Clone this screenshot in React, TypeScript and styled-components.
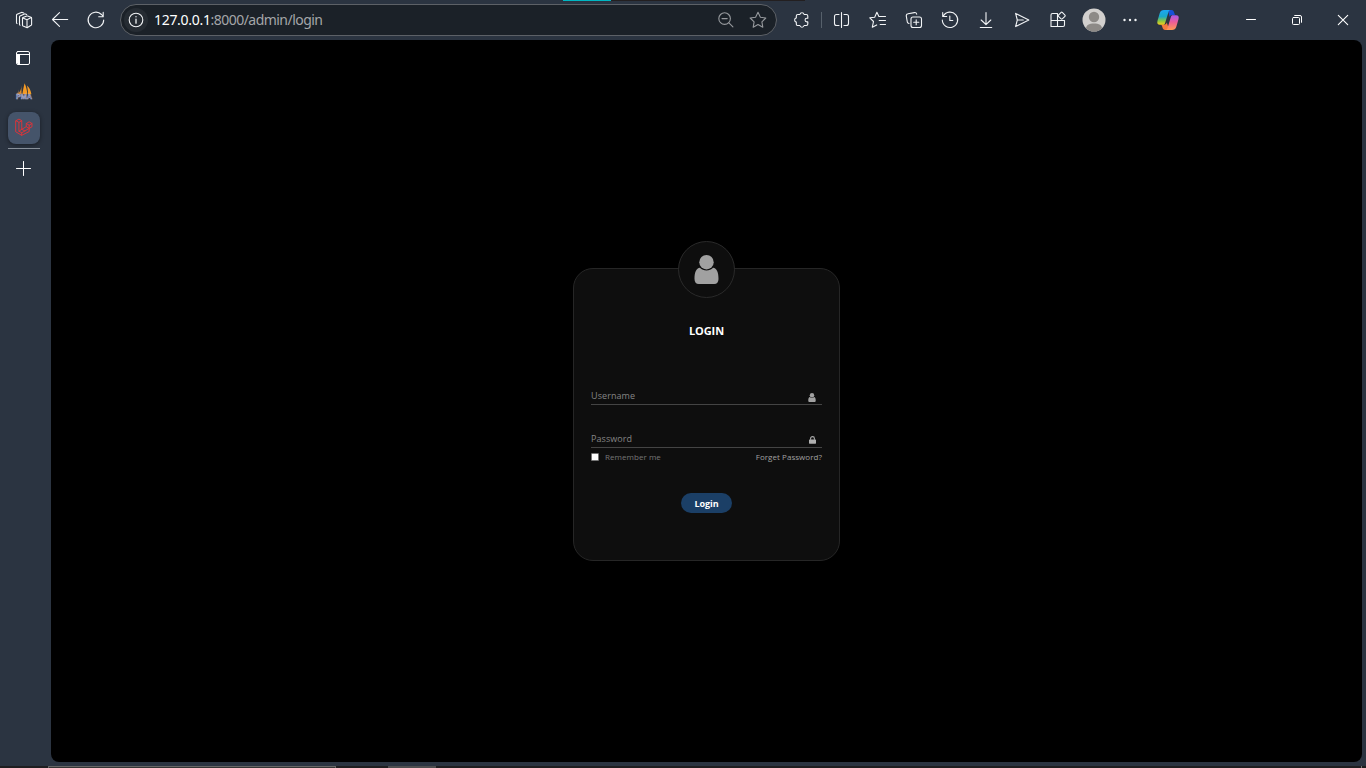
import React from 'react';
import styled, { createGlobalStyle } from 'styled-components';

const GlobalStyle = createGlobalStyle`
  *, *::before, *::after { box-sizing: border-box; }
  html, body { margin: 0; height: 100%; overflow: hidden; background: #2b3441; }
`;

const Browser = styled.div`
  position: relative;
  display: flex;
  flex-direction: column;
  width: 1366px;
  height: 768px;
  background: #2b3441;
  font-family: 'Noto Sans', 'Open Sans', sans-serif;
`;

const Toolbar = styled.header`
  display: flex;
  align-items: center;
  flex: none;
  height: 40px;
  padding-left: 6px;
`;

const Slot = styled.div<{ $width?: number }>`
  display: flex;
  align-items: center;
  justify-content: center;
  flex: none;
  width: ${(p) => p.$width ?? 36}px;
  height: 40px;
`;

const Icon = styled.svg<{ $color?: string; $stroke?: number }>`
  display: block;
  width: 24px;
  height: 24px;
  fill: none;
  stroke: ${(p) => p.$color ?? '#f2f4f6'};
  stroke-width: ${(p) => p.$stroke ?? 1.1};
  stroke-linecap: round;
  stroke-linejoin: round;
`;

const AddressBar = styled.div`
  display: flex;
  align-items: center;
  flex: none;
  width: 657px;
  height: 32px;
  margin: 0 6px;
  padding: 0 2px 0 3px;
  border: 1px solid #5d6167;
  border-radius: 16px;
  background: #1b2128;
`;

const SiteInfo = styled.div`
  display: flex;
  align-items: center;
  justify-content: center;
  width: 24px;
  height: 24px;
  border-radius: 50%;
  background: #262c33;
`;

const Url = styled.div`
  flex: 1;
  padding-left: 6px;
  color: #a4a6a9;
  font-size: 14px;
  line-height: 20px;
  letter-spacing: -0.54px;
  white-space: nowrap;
`;

const Host = styled.span`
  color: #fff;
  letter-spacing: -0.3px;
`;

const Divider = styled.div`
  width: 1px;
  height: 16px;
  margin: 0 2px;
  background: #56606b;
`;

const WindowControls = styled.div`
  display: flex;
  margin-left: auto;
`;

const Main = styled.div`
  display: flex;
  flex: none;
  height: 722px;
`;

const Sidebar = styled.nav`
  display: flex;
  flex-direction: column;
  align-items: center;
  flex: none;
  width: 51px;
  padding-right: 3px;
`;

const SideItem = styled.div<{ $active?: boolean }>`
  display: flex;
  align-items: center;
  justify-content: center;
  width: 32px;
  height: ${(p) => (p.$active ? 32 : 36)}px;
  border-radius: 8px;
  background: ${(p) => (p.$active ? '#45546a' : 'transparent')};
  box-shadow: ${(p) => (p.$active ? '0 1px 4px rgba(0, 0, 0, 0.45)' : 'none')};
`;

const SideRule = styled.div`
  width: 32px;
  height: 1px;
  margin: 4px 0 2px;
  background: #88909a;
`;

const Page = styled.main`
  display: flex;
  align-items: flex-start;
  justify-content: center;
  width: 1311px;
  height: 722px;
  padding-top: 201px;
  border-radius: 8px;
  background: #000;
  font-family: 'Open Sans', 'Noto Sans', sans-serif;
`;

const LoginBox = styled.section`
  display: flex;
  flex-direction: column;
  align-items: center;
  width: 267px;
`;

const AvatarRing = styled.div`
  position: relative;
  z-index: 1;
  display: flex;
  align-items: center;
  justify-content: center;
  width: 57px;
  height: 57px;
  margin-bottom: -30px;
  padding-bottom: 1px;
  border: 1px solid #2a2a2a;
  border-radius: 50%;
  background: #0e0e0e;
`;

const Card = styled.form`
  display: flex;
  flex-direction: column;
  width: 267px;
  height: 293px;
  padding: 54px 17px 0;
  border: 1px solid #262626;
  border-radius: 20px;
  background: #0e0e0e;
`;

const Title = styled.h1`
  margin: 0 0 46px;
  color: #fff;
  font-size: 11px;
  font-weight: 700;
  line-height: 16px;
  text-align: center;
  letter-spacing: -0.1px;
`;

const Field = styled.div`
  display: flex;
  align-items: flex-end;
  justify-content: space-between;
  height: 20px;
  margin-bottom: 23px;
  padding: 0 6px 2px 0;
  border-bottom: 1px solid #444;
  color: #858585;
  font-size: 9px;
  line-height: 13px;
  letter-spacing: 0.08px;
`;

const Options = styled.div`
  display: flex;
  align-items: center;
  height: 12px;
  margin-top: -20px;
  color: #777;
  font-size: 8px;
  line-height: 12px;
  letter-spacing: 0.05px;
`;

const Checkbox = styled.span`
  width: 8px;
  height: 8px;
  margin-right: 6px;
  border: 1px solid #767676;
  border-radius: 1px;
  background: #fff;
`;

const ForgetLink = styled.a`
  margin-left: auto;
  color: #a0a0a0;
`;

const LoginButton = styled.button`
  align-self: center;
  width: 51px;
  height: 20px;
  margin-top: 30px;
  padding: 1px 0 0;
  border: 0;
  border-radius: 10px;
  background: #1b3f66;
  color: #fff;
  font: 700 9px/19px 'Open Sans', sans-serif;
  letter-spacing: -0.1px;
`;

const TopEdge = styled.div`
  position: absolute;
  top: 0;
  left: 563px;
  display: flex;
  width: 242px;
  height: 1px;
  background: #231f20;

  &::before {
    content: '';
    width: 48px;
    background: #00b7c3;
  }
`;

const Taskbar = styled.footer`
  display: flex;
  height: 2px;
  margin-top: auto;
  padding-left: 48px;
  background: #1f1e20;
`;

const TaskSearch = styled.div`
  width: 288px;
  height: 2px;
  border: 1px solid #666;
  border-bottom: 0;
  background: #353535;
`;

const TaskActive = styled.div`
  width: 48px;
  margin-left: 52px;
  background: #4e4e50;
`;

const TaskEnd = styled.div`
  width: 1px;
  margin: 0 4px 0 auto;
  background: #777;
`;

const UserGlyph = ({ size, height }: { size: number; height: number }) => (
  <svg width={size} height={height} viewBox="0 0 24 29">
    <g fill="#a1a1a1">
      <path d="M5.4 12.8C1.8 13.2 0 17 0 24c0 3 1.6 5 4.2 5h15.6c2.6 0 4.2-2 4.2-5 0-7-1.8-10.8-5.4-11.2C16.7 14.7 14.6 15.4 12 15.4s-4.7-.7-6.6-2.6Z" />
      <circle cx="12" cy="7.2" r="7.2" />
    </g>
  </svg>
);

const LockGlyph = () => (
  <svg width="7" height="9" viewBox="0 0 7 9">
    <path d="M1.6 3.7V2.5a1.9 1.9 0 0 1 3.8 0v1.2" fill="none" stroke="#aaa" strokeWidth="1.1" />
    <rect x="0" y="3.5" width="7" height="4.2" rx="0.6" fill="#b0b0b0" />
  </svg>
);

const LaravelLogo = () => (
  <Icon viewBox="0.2 0.4 25.6 25.6" $color="#e03338" $stroke={1}>
    <path d="M4.5 5.4 7.6 3.7l3 1.7v9.2l4.8-2.8V8.4l3.1-1.8 3 1.8v3.5l-3 1.7V17l-8 4-6-3.6Z" />
    <path d="m4.5 5.4 3.1 1.8 3-1.8M7.6 7.2v9.4l3 1.7 7.9-4.7-3.1-1.8M15.4 8.4l3.1 1.8 3-1.8M18.5 10.2v3.4M10.6 14.6l-3 2M10.6 14.6l3.3 1.7M10.5 18.3V21" />
  </Icon>
);

const SailImage = styled.svg`
  display: block;
  width: 18px;
  height: 18px;
  margin-bottom: 6px;
`;

const SailLogo = () => (
  <SailImage viewBox="0 0 18 18">
    <path d="M6.4 3.4C6.3 7 5.4 9.6 2.6 12.2h4Z" fill="#d9892f" />
    <path d="M9.6 1.2c-1 4.2-1.8 7.5-2.2 11h5C12 8 11.2 4.4 9.6 1.2Z" fill="#f59a25" />
    <path d="M12 3.6c.6 3 1 6 1 8.6h3.4c-.5-3.4-2-6.4-4.4-8.6Z" fill="#f59a25" />
    <path d="M3.8 7.2C3.6 9.4 2.8 11 1 12.2h2.6Z" fill="#b47b46" />
    <text x="0.9" y="17.4" fill="#55588c" stroke="#b9bbd6" strokeWidth="0.45" fontFamily="Liberation Sans, sans-serif" fontSize="7" fontWeight="700" textLength="16.2" lengthAdjust="spacingAndGlyphs">PMA</text>
  </SailImage>
);

const CopilotLogo = () => (
  <svg width="24" height="24" viewBox="0 0 24 24">
    <defs>
      <linearGradient id="cpLeft" x1="0" y1="0" x2="0" y2="1">
        <stop offset="0" stopColor="#1ca6f4" />
        <stop offset=".45" stopColor="#1aa8c8" />
        <stop offset=".75" stopColor="#8cc63f" />
        <stop offset="1" stopColor="#f4cd1c" />
      </linearGradient>
      <linearGradient id="cpRight" x1="0" y1="0" x2="0" y2="1">
        <stop offset="0" stopColor="#a65bec" />
        <stop offset=".45" stopColor="#ec5b9a" />
        <stop offset="1" stopColor="#ff9a52" />
      </linearGradient>
    </defs>
    <path d="M12 2h3.5c1.7 0 2.1 1 2.7 2.8L19 7h-3c-1.3 0-2 .8-2.4 2Z" fill="#1850d8" />
    <path d="M5 16.5h3.8c1 0 1.6-.8 2-2l2.5 7.5H9c-2 0-2.6-2.7-3.1-4.2Z" fill="#f47a3e" />
    <path d="M8 2h6.5c-1 0-1.7.8-2.1 2.2L9.2 14.7c-.5 1.5-1 2-2.2 2H4c-2.4 0-3.2-1.4-2.5-4l2.2-7.5C4.4 3 5.8 2 8 2Z" fill="url(#cpLeft)" />
    <path d="M16.8 7.3H20c2.4 0 3.2 1.4 2.5 4l-2.2 7.5c-.7 2.2-2.1 3.2-4.3 3.2H9.5c1 0 1.7-.8 2.1-2.2l3.2-10.5c.5-1.5.9-2 2-2Z" fill="url(#cpRight)" />
  </svg>
);

const ProfileAvatar = () => (
  <svg width="24" height="24" viewBox="0 0 24 24">
    <defs>
      <clipPath id="face"><circle cx="12" cy="12" r="11.5" /></clipPath>
    </defs>
    <circle cx="12" cy="12" r="11.5" fill="#d2d0ce" />
    <g fill="#8d8a87" clipPath="url(#face)">
      <circle cx="12" cy="9" r="5.2" />
      <path d="M4 24v-3.4C4 17.5 7 15.6 12 15.6s8 1.9 8 5V24Z" />
    </g>
  </svg>
);

const starPath = 'm12 4.3 2.4 4.9 5.4.8-3.9 3.8.9 5.4-4.8-2.6-4.8 2.6.9-5.4L4.2 10l5.4-.8Z';

export default function App() {
  return (
    <>
      <GlobalStyle />
      <Browser>
        <Toolbar>
          <Slot>
            <Icon viewBox="0 0 24 24">
              <path d="M10.5 10.6c0-.5.2-.8.6-1L14.8 8c.3-.1.5-.1.8 0l3.4 1.3c.4.2.6.5.6.9v6.2c0 .4-.2.7-.5.9l-3.6 2.2c-.3.2-.6.2-.9.1l-3.5-1.5c-.4-.2-.6-.5-.6-.9Z" />
              <path d="m10.9 9.9 4.1 1.8 4.3-2.1M15 11.7v7.6" />
              <path d="M8 17.2c-.4-.2-.5-.5-.5-.9V8.9c0-.5.2-.8.6-1l4.3-1.9c.3-.1.6-.1.9 0l1.4.5" />
              <path d="M5 15.6c-.4-.2-.5-.5-.5-.9V7.3c0-.5.2-.8.6-1l4.3-1.9c.3-.1.6-.1.9 0l1.4.5" />
            </Icon>
          </Slot>
          <Slot>
            <Icon viewBox="0 0 24 24"><path d="M19.7 11.5H4.5M11.5 4.7l-7 6.8 7 6.8" /></Icon>
          </Slot>
          <Slot>
            <Icon viewBox="0 0 24 24"><path d="M19.7 12A7.8 7.8 0 1 1 17.5 6.5L19 8.2M19.2 4.3v4.4h-4.5" /></Icon>
          </Slot>
          <AddressBar>
            <SiteInfo>
              <Icon viewBox="0 0 24 24">
                <circle cx="12" cy="12" r="6.8" />
                <path d="M12 11.2v4M12 8.6v.2" strokeWidth="1.3" />
              </Icon>
            </SiteInfo>
            <Url><Host>127.0.0.1</Host>:8000/admin/login</Url>
            <Slot $width={32}>
              <Icon viewBox="0 0 24 24" $color="#96999d">
                <circle cx="10.6" cy="10.6" r="5.8" /><path d="m14.9 14.9 4 4M8 10.6h5.2" />
              </Icon>
            </Slot>
            <Slot $width={32}>
              <Icon viewBox="0 0 24 24" $color="#96999d"><path d={starPath} /></Icon>
            </Slot>
          </AddressBar>
          <Slot>
            <Icon viewBox="0 0 24 24">
              <path d="M8.8 6.5h2.1a2.15 2.15 0 0 1 4.2 0h2.2c.9 0 1.5.6 1.5 1.5v2.2h-.9a1.85 1.85 0 0 0 0 3.7h.9V16c0 .9-.6 1.5-1.5 1.5h-2.2a2.15 2.15 0 0 1-4.2 0H8.8c-.9 0-1.5-.6-1.5-1.5v-1.9a2.15 2.15 0 0 1 0-4.2V8c0-.9.6-1.5 1.5-1.5Z" />
            </Icon>
          </Slot>
          <Divider />
          <Slot>
            <Icon viewBox="0 0 24 24">
              <path d="M11.5 4.5v15M9 6.5H6.5a2 2 0 0 0-2 2v7a2 2 0 0 0 2 2H9M14 6.5h2.5a2 2 0 0 1 2 2v7a2 2 0 0 1-2 2H14" />
            </Icon>
          </Slot>
          <Slot>
            <Icon viewBox="0 0 24 24">
              <path d="M14.2 8.5h-1.3l-2-4.2-2.2 4.9-4.9.6 3.7 3.7-1.2 5.7 4.4-2.3M14 8.5h5.5M13.2 12.5h6.3M14.2 16.5h5.3" />
            </Icon>
          </Slot>
          <Slot>
            <Icon viewBox="0 0 24 24">
              <rect x="9" y="9" width="10.5" height="10.5" rx="2" />
              <path d="M14.2 11.7v5.1M11.7 14.2h5.1M7 15.5l-1-.5a2 2 0 0 1-.8-1.7l-.9-5.1A2 2 0 0 1 6 5.8l6.4-1.2c1.2-.2 2 .4 2.3 1.5" />
            </Icon>
          </Slot>
          <Slot>
            <Icon viewBox="0 0 24 24"><path d="M5.3 8A7.7 7.7 0 1 1 4.3 12M4.7 4.5v4h4M11.8 8v4.5h3" /></Icon>
          </Slot>
          <Slot>
            <Icon viewBox="0 0 24 24"><path d="M12 4.5v12M7.2 12l4.8 4.7 4.8-4.7M6.3 19.5h11.4" /></Icon>
          </Slot>
          <Slot>
            <Icon viewBox="0 0 24 24"><path d="m5.6 5.4 13.2 6.6-13.2 6.6L7.3 12ZM7.3 12h6" /></Icon>
          </Slot>
          <Slot>
            <Icon viewBox="0 0 24 24">
              <path d="M11.5 5.5h-5a1.5 1.5 0 0 0-1.5 1.5v11.5h12a1.5 1.5 0 0 0 1.5-1.5v-4.5H5M11.5 5.5v13M11.5 12.5h7" />
              <rect x="13" y="5" width="5.4" height="5.4" rx=".8" transform="rotate(45 15.7 7.7)" />
            </Icon>
          </Slot>
          <Slot><ProfileAvatar /></Slot>
          <Slot>
            <Icon viewBox="0 0 24 24">
              <g fill="#f2f4f6" stroke="none"><circle cx="6.5" cy="12" r="1.2" /><circle cx="12" cy="12" r="1.2" /><circle cx="17.5" cy="12" r="1.2" /></g>
            </Icon>
          </Slot>
          <Slot $width={40}><CopilotLogo /></Slot>
          <WindowControls>
            <Slot $width={46}><Icon viewBox="0 0 24 24" $color="#fff" $stroke={1}><path d="M7.5 11.5h9" /></Icon></Slot>
            <Slot $width={46}>
              <Icon viewBox="0 0 24 24" $color="#fff" $stroke={1}>
                <rect x="7.5" y="9.5" width="7" height="7" rx="1" /><path d="M9.7 7.5h5.3a1.5 1.5 0 0 1 1.5 1.5v5.3" />
              </Icon>
            </Slot>
            <Slot $width={46}><Icon viewBox="0 0 24 24" $color="#fff"><path d="m7.3 7.3 9.4 9.4M16.7 7.3l-9.4 9.4" /></Icon></Slot>
          </WindowControls>
        </Toolbar>
        <Main>
          <Sidebar>
            <SideItem>
              <Icon viewBox="0 0 24 24" $color="#fff" $stroke={1}>
                <rect x="4.5" y="5.5" width="13" height="13" rx="1.5" />
                <path d="M5 8.5h12.5" />
                <path d="M5 9h3v9.5H6L5 17Z" fill="#fff" stroke="none" />
              </Icon>
            </SideItem>
            <SideItem><SailLogo /></SideItem>
            <SideItem $active><LaravelLogo /></SideItem>
            <SideRule />
            <SideItem><Icon viewBox="0 0 24 24" $color="#fff" $stroke={1}><path d="M11.5 4.5v14M4.5 11.5h14" /></Icon></SideItem>
          </Sidebar>
          <Page>
            <LoginBox>
              <AvatarRing><UserGlyph size={25} height={29} /></AvatarRing>
              <Card>
                <Title>LOGIN</Title>
                <Field><span>Username</span><UserGlyph size={8} height={9} /></Field>
                <Field><span>Password</span><LockGlyph /></Field>
                <Options>
                  <Checkbox />
                  <span>Remember me</span>
                  <ForgetLink>Forget Password?</ForgetLink>
                </Options>
                <LoginButton type="button">Login</LoginButton>
              </Card>
            </LoginBox>
          </Page>
        </Main>
        <Taskbar><TaskSearch /><TaskActive /><TaskEnd /></Taskbar>
        <TopEdge />
      </Browser>
    </>
  );
}
